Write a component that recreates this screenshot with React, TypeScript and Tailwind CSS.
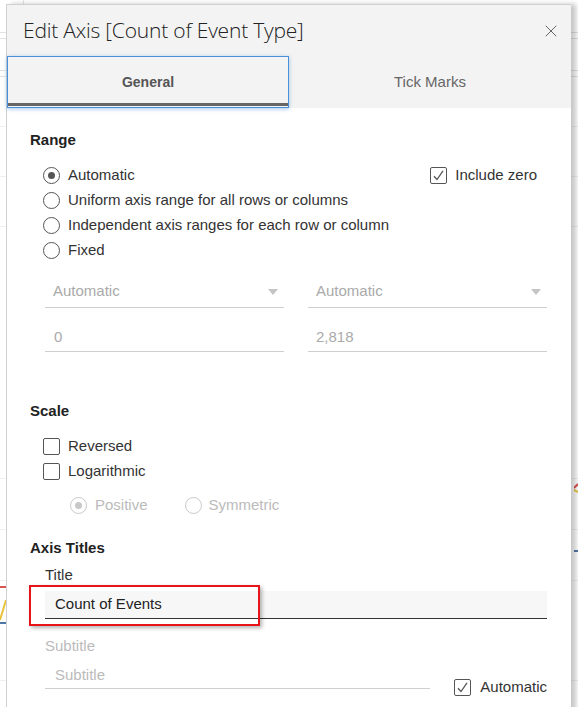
import { X } from 'lucide-react';

const Radio = ({ checked = false, disabled = false }: { checked?: boolean; disabled?: boolean }) => (
  <span
    className={`flex h-[17px] w-[17px] flex-shrink-0 items-center justify-center rounded-full border bg-white ${
      disabled ? 'border-[#c8c8c8]' : 'border-[#555]'
    }`}
  >
    {checked && (
      <span className={`h-[7px] w-[7px] rounded-full ${disabled ? 'bg-[#c8c8c8]' : 'bg-[#555]'}`} />
    )}
  </span>
);

const Checkbox = ({ checked = false }: { checked?: boolean }) => (
  <span className="flex h-[17px] w-[17px] flex-shrink-0 items-center justify-center rounded-[2px] border border-[#555] bg-white">
    {checked && (
      <svg width="13" height="13" viewBox="0 0 13 13" fill="none">
        <path d="M2 7.2 L5 10.5 L11 1.8" stroke="#555" strokeWidth="1.3" />
      </svg>
    )}
  </span>
);

const RadioRow = ({ label, checked }: { label: string; checked?: boolean }) => (
  <div className="flex h-[25px] items-center gap-[8px]">
    <Radio checked={checked} />
    <span>{label}</span>
  </div>
);

const Caret = () => (
  <svg width="10" height="6" viewBox="0 0 10 6" className="mr-[6px]">
    <path d="M0 0 H10 L5 6 Z" fill="#c4c4c4" />
  </svg>
);

const SectionTitle = ({ children, className = '' }: { children: string; className?: string }) => (
  <div className={`flex h-5 items-center font-bold text-[#222] ${className}`}>{children}</div>
);

const App = () => {
  return (
    <div className="relative h-[707px] w-[578px] overflow-hidden bg-white font-['Liberation_Sans',Arial,sans-serif] text-[15px] text-[#333]">
      {/* chart behind the dialog */}
      <div className="absolute left-0 top-0 h-full w-full">
        <div className="absolute left-[23px] top-0 h-[4px] w-px bg-[#e4e4e4]" />
        <div className="absolute left-0 top-[32px] h-px w-full bg-[#e2e2e2]" />
        <div className="absolute left-0 top-[38px] h-px w-full bg-[#e2e2e2]" />
        <div className="absolute left-0 top-[70px] h-px w-full bg-[#e2e2e2]" />
        <div className="absolute left-0 top-[76px] h-px w-full bg-[#e2e2e2]" />
        <div className="absolute left-0 top-[126px] h-px w-full bg-[#f0f0f0]" />
        <div className="absolute left-0 top-[176px] h-px w-full bg-[#f0f0f0]" />
        <div className="absolute left-0 top-[226px] h-px w-full bg-[#f0f0f0]" />
        <div className="absolute left-0 top-[478px] h-px w-full bg-[#f0f0f0]" />
        <div className="absolute left-0 top-[529px] h-px w-full bg-[#f0f0f0]" />
        <div className="absolute left-0 top-[580px] h-px w-full bg-[#f0f0f0]" />
        <div className="absolute left-0 top-[680px] h-px w-full bg-[#f0f0f0]" />
        <svg className="absolute left-0 top-[580px]" width="8" height="50" viewBox="0 0 8 50">
          <path d="M0 7 H6" stroke="#d9534f" strokeWidth="2" />
          <path d="M0 40 L6 20" stroke="#e8c33a" strokeWidth="2" />
          <path d="M0 43 H6" stroke="#4e79a7" strokeWidth="2" />
        </svg>
        <svg className="absolute right-0 top-[478px]" width="4" height="80" viewBox="0 0 4 80">
          <path d="M0 10 L4 6" stroke="#d9534f" strokeWidth="2" />
          <path d="M0 12 L4 14" stroke="#e8c33a" strokeWidth="2" />
          <path d="M0 73 H4" stroke="#4e79a7" strokeWidth="2" />
        </svg>
      </div>

      {/* dialog */}
      <div className="absolute left-[6px] top-[4px] flex h-[710px] w-[565px] flex-col border-l border-t border-[#d0d0d0] bg-white shadow-[5px_0_5px_rgba(0,0,0,0.22)]">
        {/* header */}
        <div className="bg-[#f3f3f3]">
          <div className="flex h-[51px] items-center justify-between pl-[16px] pr-[10px]">
            <h1 className="font-['Open_Sans',sans-serif] text-[21px] font-light tracking-[-0.2px] text-[#222]">
              Edit Axis [Count of Event Type]
            </h1>
            <X className="h-[20px] w-[20px] text-[#666]" strokeWidth={1.2} />
          </div>
          <div className="flex h-[52px]">
            <div className="relative flex w-[282px] items-center justify-center border border-[#4a90d9] text-[14px] font-bold text-[#555] shadow-[0_1px_4px_rgba(74,144,217,0.5)]">
              General
              <div className="absolute bottom-[1px] left-0 right-0 h-[3px] bg-[#666]" />
            </div>
            <div className="flex flex-1 items-center justify-center text-[15px] text-[#666]">Tick Marks</div>
          </div>
        </div>

        {/* body */}
        <div className="flex flex-col pl-[23px] pr-[24px]">
          <SectionTitle className="mt-[22px]">Range</SectionTitle>
          <div className="mt-[13px] flex pl-[13px]">
            <div className="flex-1">
              <RadioRow label="Automatic" checked />
              <RadioRow label="Uniform axis range for all rows or columns" />
              <RadioRow label="Independent axis ranges for each row or column" />
              <RadioRow label="Fixed" />
            </div>
            <div className="mr-[10px] flex h-[25px] items-center gap-[8px]">
              <Checkbox checked />
              <span>Include zero</span>
            </div>
          </div>

          <div className="mt-[18px] flex gap-[24px] pl-[15px] text-[#aaa]">
            <div className="flex h-[27px] w-[239px] items-center justify-between border-b border-[#cfcfcf] pb-[5px] pl-[8px]">
              <span>Automatic</span>
              <Caret />
            </div>
            <div className="flex h-[27px] w-[239px] items-center justify-between border-b border-[#cfcfcf] pb-[5px] pl-[8px]">
              <span>Automatic</span>
              <Caret />
            </div>
          </div>
          <div className="mt-[17px] flex gap-[24px] pl-[15px] text-[#aaa]">
            <div className="flex h-[27px] w-[239px] items-center border-b border-[#cfcfcf] pb-[1px] pl-[9px]">0</div>
            <div className="flex h-[27px] w-[239px] items-center border-b border-[#cfcfcf] pb-[1px] pl-[8px]">2,818</div>
          </div>

          <SectionTitle className="mt-[49px]">Scale</SectionTitle>
          <div className="mt-[13px] pl-[13px]">
            <div className="flex h-[25px] items-center gap-[8px]">
              <Checkbox />
              <span>Reversed</span>
            </div>
            <div className="flex h-[25px] items-center gap-[8px]">
              <Checkbox />
              <span>Logarithmic</span>
            </div>
            <div className="mt-[9px] flex h-[25px] items-center pl-[27px] text-[#bbb]">
              <Radio checked disabled />
              <span className="ml-[8px]">Positive</span>
              <span className="ml-[37px]">
                <Radio disabled />
              </span>
              <span className="ml-[7px]">Symmetric</span>
            </div>
          </div>

          <SectionTitle className="mt-[20px]">Axis Titles</SectionTitle>
          <div className="mt-[7px] flex h-5 items-center pl-[15px] text-[#333]">Title</div>
          <div className="relative ml-[15px] mt-[6px] flex h-[28px] items-center border-b border-[#333] bg-[#f7f7f7] pl-[10px] text-[#222]">
            Count of Events
            <div className="absolute -left-[16px] -top-[6px] h-[41px] w-[231px] border-2 border-[#e8141a] shadow-[2px_2px_4px_rgba(0,0,0,0.3)]" />
          </div>
          <div className="mt-[17px] flex h-5 items-center pl-[15px] text-[#bbb]">Subtitle</div>
          <div className="mt-[6px] flex items-end pl-[15px]">
            <div className="flex h-[27px] w-[387px] items-center border-b border-[#cfcfcf] pl-[10px] text-[#bbb]">Subtitle</div>
            <div className="mb-[-11px] ml-[24px] flex h-[25px] items-center gap-[9px]">
              <Checkbox checked />
              <span>Automatic</span>
            </div>
          </div>
        </div>
      </div>
    </div>
  );
};

export default App;
